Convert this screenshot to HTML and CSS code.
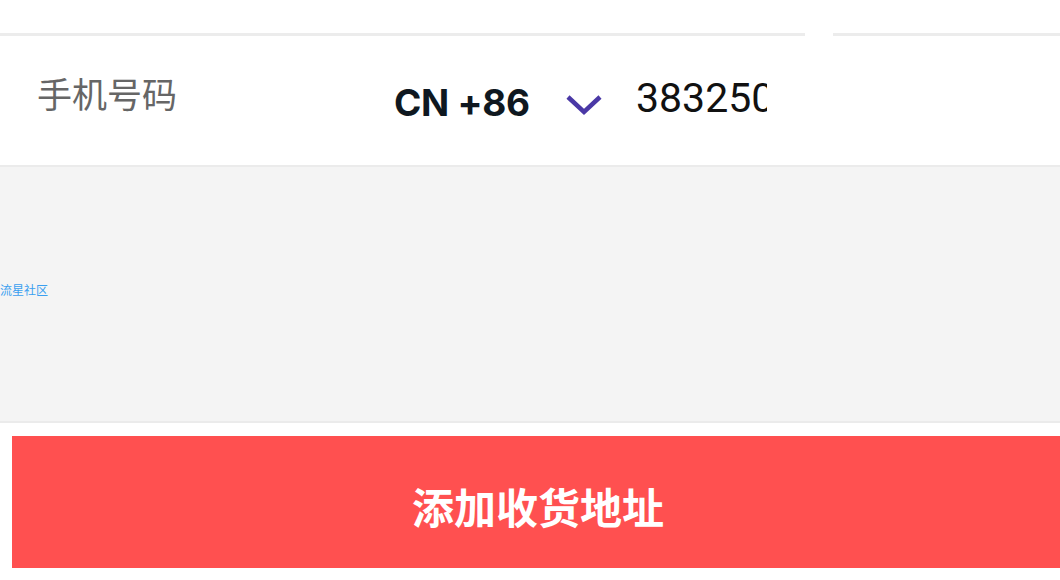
FILE: index.html
```html
<!DOCTYPE html>
<html lang="zh-CN">
<head>
<meta charset="utf-8">
<link rel="stylesheet" href="styles.css">
</head>
<body>
<div class="page">
  <div class="top"></div>
  <div class="divider">
    <div class="seg seg-left"></div>
    <div class="seg seg-right"></div>
  </div>
  <div class="phone-row">
    <div class="label">手机号码</div>
    <div class="code">CN +86</div>
    <svg class="chevron" width="36" height="22" viewBox="0 0 36 22"><path d="M2 3 L18 18 L34 3" fill="none" stroke="#4a38a6" stroke-width="4.5"/></svg>
    <div class="number"><span>3832506</span></div>
  </div>
  <div class="gray">
    <span class="tag">流星社区</span>
  </div>
  <div class="footer">
    <button class="add-btn">添加收货地址</button>
  </div>
</div>
</body>
</html>
```

FILE: styles.css
```css
html, body {
  margin: 0;
  padding: 0;
  background: #ffffff;
}
.page {
  width: 1060px;
  height: 580px;
  overflow: hidden;
  font-family: "Noto Sans CJK SC", sans-serif;
}
.top {
  height: 33px;
}
.divider {
  display: flex;
  gap: 28px;
}
.seg {
  height: 3px;
  background: #ececec;
}
.seg-left {
  width: 805px;
}
.seg-right {
  flex: 1;
}
.phone-row {
  height: 129px;
  display: flex;
  align-items: center;
  border-bottom: 2px solid #ebebeb;
  background: #fff;
}
.label {
  margin-left: 37px;
  width: 357px;
  font-size: 35px;
  color: #666666;
  line-height: 1;
  margin-top: -16px;
}
.code {
  font-family: "Inter", sans-serif;
  font-weight: 700;
  font-size: 37px;
  color: #0f1820;
  letter-spacing: -0.3px;
  width: 172px;
  margin-top: 4px;
}
.chevron {
  display: block;
  margin-top: 8px;
}
.number {
  margin-left: 34px;
  width: 131px;
  overflow: hidden;
  white-space: nowrap;
  font-family: "Roboto", sans-serif;
  font-size: 41px;
  color: #111;
  margin-top: -6px;
}
.gray {
  height: 254px;
  background: #f4f4f4;
  border-bottom: 2px solid #ebebeb;
  display: flex;
  align-items: center;
}
.tag {
  font-size: 12px;
  color: #3a9ff0;
  margin-top: -10px;
}
.footer {
  padding: 13px 0 0 12px;
}
.add-btn {
  display: flex;
  align-items: center;
  justify-content: center;
  width: 1048px;
  height: 132px;
  border: none;
  background: #ff5050;
  color: #ffffff;
  font-family: "Noto Sans CJK SC", sans-serif;
  font-weight: 700;
  font-size: 42px;
  padding: 6px 0 0 4px;
  margin: 0;
}
```
